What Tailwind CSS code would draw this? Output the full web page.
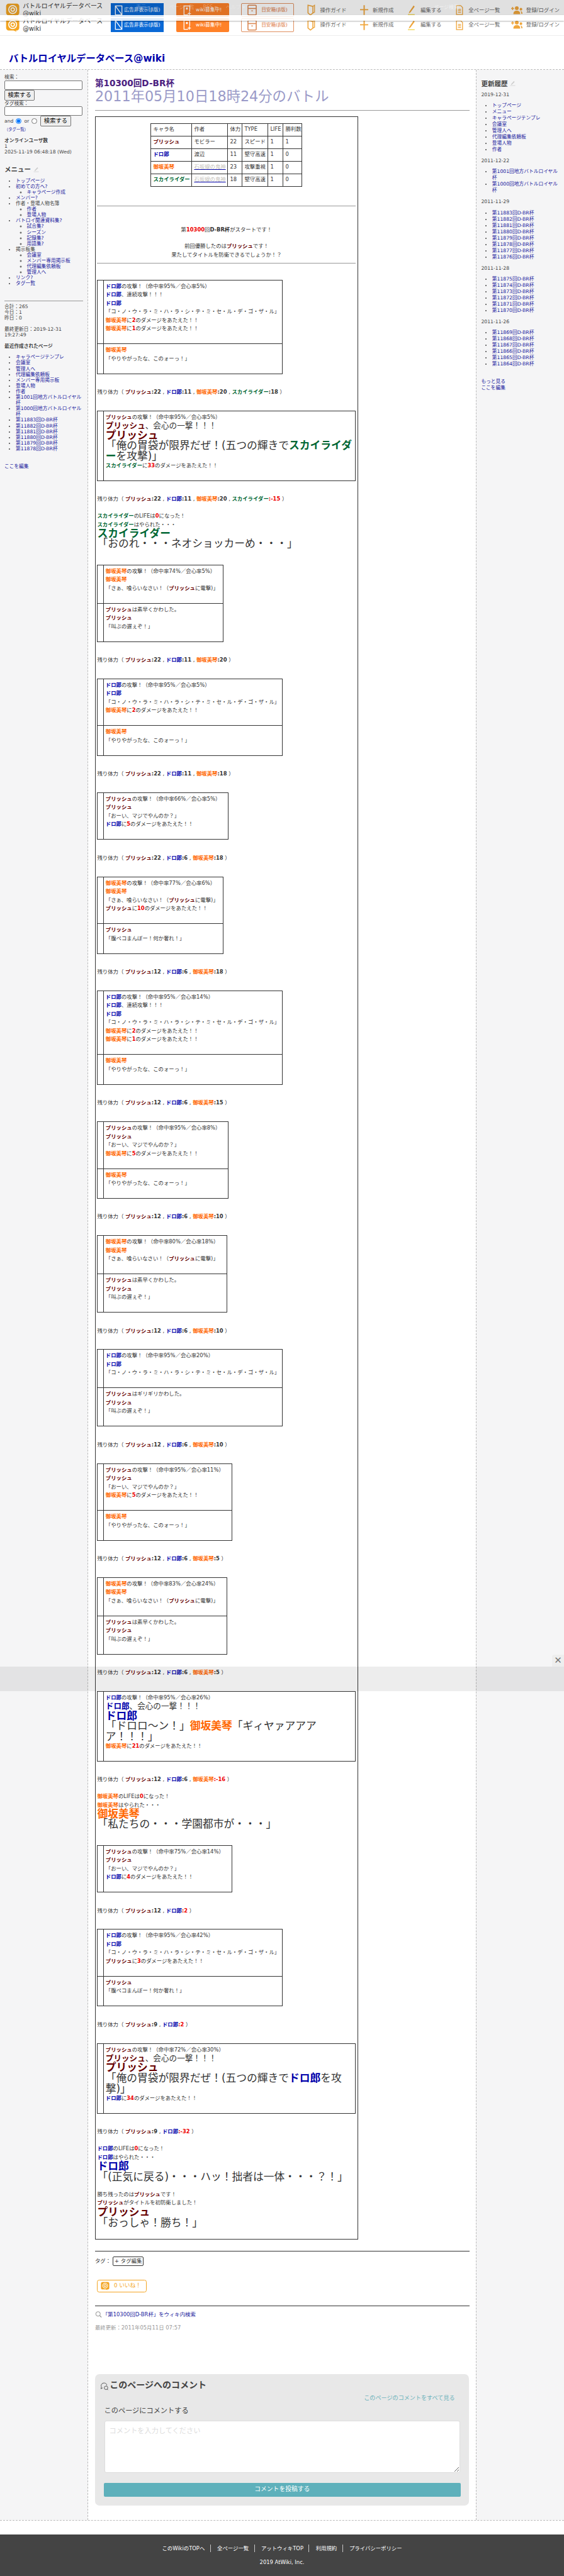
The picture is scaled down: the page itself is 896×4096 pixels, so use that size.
<!DOCTYPE html>
<html lang="ja">
<head>
<meta charset="UTF-8">
<title>第10300回D-BR杯 - バトルロイヤルデータベース@wiki</title>
<script src="https://cdn.jsdelivr.net/npm/@tailwindcss/browser@4"></script>
</head>
<body class="bg-white font-['DejaVu_Sans','Noto_Sans_CJK_JP',sans-serif] text-[#333]">

<!-- icons used more than once -->
<svg class="hidden">
  <symbol id="logo" viewBox="0 0 32 32"><path d="M7 1h18a6 6 0 0 1 6 6v15a6 6 0 0 1-6 6h-2l2 3-7-3H7a6 6 0 0 1-6-6V7a6 6 0 0 1 6-6z" fill="#f4a521"/><circle cx="16" cy="14.500" r="9" fill="none" stroke="#fff" stroke-width="2.400"/><circle cx="16" cy="14.500" r="4" fill="none" stroke="#fff" stroke-width="2.400"/></symbol>
  <symbol id="no-ad" viewBox="0 0 20 26"><path d="M2 2h16v22H2z" fill="none" stroke="#fff" stroke-width="2"/><path d="M2 2l16 22" stroke="#fff" stroke-width="2"/></symbol>
  <symbol id="wiki-new" viewBox="0 0 20 26"><path d="M12 24H2V2h14v14" fill="none" stroke="#fff" stroke-width="2"/><path d="M15 17v8M11 21h8" stroke="#fff" stroke-width="2"/><path d="M7 6h4v5H7z" fill="#fff"/></symbol>
  <symbol id="suggest" viewBox="0 0 24 28"><rect x="1.500" y="1.500" width="21" height="25" rx="2" fill="none" stroke="#d9824a" stroke-width="2.400"/><path d="M2 10h20" stroke="#d9824a" stroke-width="2.400"/><path d="M10 15h4v2h-4z" fill="#d9824a"/></symbol>
  <symbol id="guide" viewBox="0 0 20 28"><path d="M2 2l12 3v16l-6 5-6-5z" fill="none" stroke="#f0a63c" stroke-width="2.400"/><path d="M14 5l4-3v17l-4 2" fill="none" stroke="#f0a63c" stroke-width="2"/></symbol>
  <symbol id="plus" viewBox="0 0 20 28"><path d="M10 2v24M0 13h20" stroke="#f0a63c" stroke-width="3"/></symbol>
  <symbol id="edit" viewBox="0 0 20 28"><path d="M15 2L4 18l-2 5 5-3L18 5z" fill="#f0a63c"/><path d="M0 26h18" stroke="#f0d23c" stroke-width="2"/></symbol>
  <symbol id="doc" viewBox="0 0 20 28"><path d="M2 2h11l5 5v19H2z" fill="none" stroke="#f0a63c" stroke-width="2.200"/><path d="M6 12h8M6 16h8M6 20h8" stroke="#f0a63c" stroke-width="2"/></symbol>
  <symbol id="users" viewBox="0 0 30 24"><circle cx="15" cy="6" r="5" fill="#f0a63c"/><path d="M6 22c0-7 4-9 9-9s9 2 9 9z" fill="#f0a63c"/><circle cx="26" cy="9" r="3.500" fill="#f0a63c"/><path d="M25 14c3 0 5 2 5 7h-3c0-3-1-5-2-7z" fill="#f0a63c"/><path d="M4 3v8M0 7h8" stroke="#f0a63c" stroke-width="2.400"/></symbol>
  <symbol id="pencil" viewBox="0 0 20 20"><path d="M14 2L5 12l-1 4 4-2 9-9z" fill="#ccc"/><path d="M1 18h18" stroke="#ccc" stroke-width="1.500"/></symbol>
</svg>

<div class="relative w-[896px] overflow-hidden">

  <!-- header: second copy of the bar sits in flow, the first one lies over it -->
  <header class="relative h-[57.2px] border-b border-[#eee] pt-[28.6px]">
    <div class="flex h-[22.3px] items-center pl-[9px]">
      <svg class="h-[22.3px] w-[22.3px] shrink-0"><use href="#logo"/></svg>
      <div class="ml-[4.9px] w-[140.3px] shrink-0 text-[9.8px] leading-[11.9px]">バトルロイヤルデータベース<br>@wiki</div>
      <a class="flex h-full w-[83.8px] shrink-0 items-center justify-center gap-[2px] bg-[#0a69d6] text-[7.7px] text-white"><svg class="h-[17px] w-[13px]"><use href="#no-ad"/></svg>広告非表示(β版)</a>
      <a class="ml-[19.5px] flex h-full w-[83.8px] shrink-0 items-center justify-center gap-[7px] rounded-[2px] bg-[#ff8128] text-[7.7px] text-white"><svg class="h-[17px] w-[13px]"><use href="#wiki-new"/></svg>wiki募集中!</a>
      <a class="ml-[19.5px] flex h-full w-[83.8px] shrink-0 items-center justify-center gap-[7px] rounded-[2px] border border-[#e09060] text-[7.7px] text-[#dd7a45]"><svg class="h-[18px] w-[15px]"><use href="#suggest"/></svg>目安箱(β版)</a>
      <div class="ml-[21.6px] flex items-center text-[8.4px] text-[#666]">
        <svg class="h-[20px] w-[13px]"><use href="#guide"/></svg><span class="ml-[7px]">操作ガイド</span>
        <svg class="ml-[21.6px] h-[20px] w-[13px]"><use href="#plus"/></svg><span class="ml-[7px]">新規作成</span>
        <svg class="ml-[23px] h-[20px] w-[12px]"><use href="#edit"/></svg><span class="ml-[7.500px]">編集する</span>
        <svg class="ml-[22.3px] h-[20px] w-[12px]"><use href="#doc"/></svg><span class="ml-[8.500px]">全ページ一覧</span>
        <svg class="ml-[18px] h-[15px] w-[18px]"><use href="#users"/></svg><span class="ml-[5.500px]">登録/ログイン</span>
      </div>
    </div>

    <div class="absolute inset-x-0 top-[4.9px] flex h-[22.3px] items-center pl-[9px]">
      <svg class="h-[22.3px] w-[22.3px] shrink-0"><use href="#logo"/></svg>
      <div class="ml-[4.9px] w-[140.3px] shrink-0 text-[9.8px] leading-[11.9px]">バトルロイヤルデータベース<br>@wiki</div>
      <a class="flex h-full w-[83.8px] shrink-0 items-center justify-center gap-[2px] bg-[#0a69d6] text-[7.7px] text-white"><svg class="h-[17px] w-[13px]"><use href="#no-ad"/></svg>広告非表示(β版)</a>
      <a class="ml-[19.5px] flex h-full w-[83.8px] shrink-0 items-center justify-center gap-[7px] rounded-[2px] bg-[#ff8128] text-[7.7px] text-white"><svg class="h-[17px] w-[13px]"><use href="#wiki-new"/></svg>wiki募集中!</a>
      <a class="ml-[19.5px] flex h-full w-[83.8px] shrink-0 items-center justify-center gap-[7px] rounded-[2px] border border-[#e09060] text-[7.7px] text-[#dd7a45]"><svg class="h-[18px] w-[15px]"><use href="#suggest"/></svg>目安箱(β版)</a>
      <div class="ml-[21.6px] flex items-center text-[8.4px] text-[#666]">
        <svg class="h-[20px] w-[13px]"><use href="#guide"/></svg><span class="ml-[7px]">操作ガイド</span>
        <svg class="ml-[21.6px] h-[20px] w-[13px]"><use href="#plus"/></svg><span class="ml-[7px]">新規作成</span>
        <svg class="ml-[23px] h-[20px] w-[12px]"><use href="#edit"/></svg><span class="ml-[7.500px]">編集する</span>
        <svg class="ml-[22.3px] h-[20px] w-[12px]"><use href="#doc"/></svg><span class="ml-[8.500px]">全ページ一覧</span>
        <svg class="ml-[18px] h-[15px] w-[18px]"><use href="#users"/></svg><span class="ml-[5.500px]">登録/ログイン</span>
      </div>
    </div>

    <!-- dim strip with its faint menu, then the pale band and its shadow -->
    <div class="absolute inset-x-0 top-0 flex h-[23.7px] items-center bg-black/12 pl-[130px] text-[8px] text-white/30">
      <span>編集</span><span class="ml-[70px]">表示 ▾</span><span class="ml-[30px]">ページ一覧</span><span class="ml-[14px]">RSS ▾</span><span class="ml-[14px]">ヘルプ ▾</span>
      <span class="ml-[300px] text-white/60">ページ検索</span>
    </div>
    <div class="absolute inset-x-0 top-[23.7px] h-[9.800px] bg-white/85 shadow-[0_1px_2px_rgba(0,0,0,0.3)]"></div>
  </header>

  <!-- site title -->
  <div class="h-[53px] pl-[14px] pt-[26px] text-[15.3px] leading-[20px] font-bold text-[#0000aa]">バトルロイヤルデータベース@wiki</div>

  <div class="flex h-[3897.8px] border-y border-dashed border-[#bbb]">

    <!-- left column -->
    <aside class="w-[140.3px] shrink-0 border-r border-dashed border-[#bbb] bg-[#f5f5f6] px-[7px] pt-[7.3px] text-[7.7px] leading-[9.1px] text-[#444]">
      <div>検索：</div>
      <input type="text" class="mt-[0.7px] block h-[14.3px] w-[124.2px] rounded-[2px] border border-[#767676] bg-white">
      <button class="block h-[17px] w-[48.2px] rounded-[2px] border border-[#767676] bg-[#efefef] text-[9.3px] leading-none text-black">検索する</button>
      <div>タグ検索：</div>
      <input type="text" class="mt-[0.7px] block h-[14.3px] w-[124.2px] rounded-[2px] border border-[#767676] bg-white">
      <div class="flex h-[17px] items-center">
        <span>and</span>
        <input type="radio" name="tagop" checked class="ml-[4px] h-[9px] w-[9px]">
        <span class="ml-[4px]">or</span>
        <input type="radio" name="tagop" class="ml-[4px] h-[9px] w-[9px]">
        <button class="ml-[5px] h-[17px] w-[48.2px] rounded-[2px] border border-[#767676] bg-[#efefef] text-[9.3px] leading-none text-black">検索する</button>
      </div>
      <a class="block text-[6.3px] text-[#1a1a9e]">（タグ一覧）</a>
      <div class="mt-[9.4px] font-bold">オンラインユーザ数</div>
      <div>1</div>
      <div>2025-11-19 06:48:18 (Wed)</div>
      <h3 class="mt-[15.7px] flex items-center text-[10.5px] leading-[14px] font-bold">メニュー<svg class="ml-[4px] h-[9px] w-[9px]"><use href="#pencil"/></svg></h3>
      <ul class="mt-[6.6px] list-disc pl-[18.1px] text-[#1a1a9e] marker:text-[#444] [&_ul]:list-[circle] [&_ul]:pl-[17.45px]">
        <li><a>トップページ</a></li>
        <li><a>初めての方へ?</a>
          <ul><li><a>キャラページ作成</a></li></ul></li>
        <li><a>メンバー?</a></li>
        <li class="text-[#444]">作者・登場人物名簿
          <ul class="text-[#1a1a9e]"><li><a>作者</a></li><li><a>登場人物</a></li></ul></li>
        <li><a>バトロイ関連資料集?</a>
          <ul><li><a>試合集?</a></li><li><a>シーズン</a></li><li><a>記録集?</a></li><li><a>用語集?</a></li></ul></li>
        <li class="text-[#444]">掲示板集
          <ul class="text-[#1a1a9e]"><li><a>会議室</a></li><li><a>メンバー専用掲示板</a></li><li><a>代理編集依頼板</a></li><li><a>管理人へ</a></li></ul></li>
        <li><a>リンク?</a></li>
        <li><a>タグ一覧</a></li>
      </ul>
      <hr class="mt-[22.3px] w-[125px] border-[#999]">
      <div class="mt-[4.2px]">合計：265<br>今日：1<br>昨日：0</div>
      <div class="mt-[9.1px]">最終更新日：2019-12-31<br>19:27:49</div>
      <div class="mt-[8.4px] font-bold">最近作成されたページ</div>
      <ul class="mt-[8.4px] list-disc pl-[18.1px] text-[#1a1a9e] marker:text-[#444]">
        <li>キャラページテンプレ</li><li>会議室</li><li>管理人へ</li><li>代理編集依頼板</li><li>メンバー専用掲示板</li><li>登場人物</li><li>作者</li>
        <li>第1001回地方バトルロイヤル杯</li><li>第1000回地方バトルロイヤル杯</li>
        <li>第11883回D-BR杯</li><li>第11882回D-BR杯</li><li>第11881回D-BR杯</li><li>第11880回D-BR杯</li><li>第11879回D-BR杯</li><li>第11878回D-BR杯</li>
      </ul>
      <a class="mt-[18.8px] block text-[#1a1a9e]">ここを編集</a>
    </aside>

    <!-- main column -->
    <main class="min-w-0 flex-1 px-[10.6px] pt-[13.3px]">
      <h2 class="text-[13.6px] leading-[16.8px] font-bold text-[#4b2080]">第10300回D-BR杯</h2>
      <h1 class="text-[22.3px] leading-[25.1px] text-[#9a9ac8]">2011年05月10日18時24分のバトル</h1>
      <hr class="mt-[9px] border-[#999]">

      <!-- battle log -->
      <div class="mt-[8.4px] w-[418px] border border-[#333] px-[2.5px] pb-[18.1px] pt-[9.8px] text-[8.4px] leading-[13.5px]">

        <table class="mx-auto w-[241px] table-fixed border-collapse [&_td]:h-[20px] [&_td]:border [&_td]:border-[#333] [&_td]:pl-[3px]">
          <tr><td class="w-[65px]">キャラ名</td><td class="w-[57px]">作者</td><td class="w-[23px]">体力</td><td class="w-[41px]">TYPE</td><td class="w-[24px]">LIFE</td><td>勝利数</td></tr>
          <tr><td><b class="text-[#600]">プリッシュ</b></td><td>モビラー</td><td>22</td><td>スピード</td><td>1</td><td>1</td></tr>
          <tr><td><b class="text-[#00a]">ドロ郎</b></td><td>渡辺</td><td>11</td><td>堅守高速</td><td>1</td><td>0</td></tr>
          <tr><td><b class="text-[#f60]">御坂美琴</b></td><td><a class="text-[#c4bfba] underline decoration-[#00a]">石坂線の鬼神</a></td><td>23</td><td>攻撃重視</td><td>1</td><td>0</td></tr>
          <tr><td><b class="text-[#063]">スカイライダー</b></td><td><a class="text-[#c4bfba] underline decoration-[#00a]">石坂線の鬼神</a></td><td>18</td><td>堅守高速</td><td>1</td><td>0</td></tr>
        </table>

        <hr class="mt-[30px] border-[#999]">
        <div class="mt-[30px] text-center leading-[14px]">第<b class="text-[#e00]">10300</b>回<b>D-BR杯</b>がスタートです！</div>
        <div class="mt-[12.6px] text-center leading-[14px]">前回優勝したのは<b class="text-[#600]">プリッシュ</b>です！<br>果たしてタイトルを防衛できるでしょうか！？</div>
        <hr class="mt-[5.6px] border-[#999]">

        <div class="pt-[25.8px] [&_table]:border-collapse [&_td]:border [&_td]:border-[#333] [&_td:first-child]:w-[9.4px] [&_td:last-child]:pb-[3px] [&_td:last-child]:pl-[3px] [&_td:last-child]:pt-[3px] [&_td:last-child]:align-top">

          <table class="w-[295px]">
            <tr><td></td><td><b class="text-[#00a]">ドロ郎</b>の攻撃！（命中率95%／会心率5%）<br><b class="text-[#00a]">ドロ郎</b>、連続攻撃！！！<br><b class="text-[#00a]">ドロ郎</b><br>「コ・ノ・ウ・ラ・ミ・ハ・ラ・シ・テ・ミ・セ・ル・デ・ゴ・ザ・ル」<br><b class="text-[#f60]">御坂美琴</b>に<b class="text-[#e00]">2</b>のダメージをあたえた！！<br><b class="text-[#f60]">御坂美琴</b>に<b class="text-[#e00]">1</b>のダメージをあたえた！！<br><br></td></tr>
            <tr><td></td><td><b class="text-[#f60]">御坂美琴</b><br>「やりやがったな、このォーっ！」<br><br></td></tr>
          </table>
          <p class="my-[22.35px]">残り体力（ <b class="text-[#600]">プリッシュ</b><b>:22</b> , <b class="text-[#00a]">ドロ郎</b><b>:11</b> , <b class="text-[#f60]">御坂美琴</b><b>:20</b> , <b class="text-[#063]">スカイライダー</b><b>:18</b> ）</p>

          <table class="w-[411px]">
            <tr><td></td><td>
              <div><b class="text-[#600]">プリッシュ</b>の攻撃！（命中率95%／会心率5%）</div>
              <div class="text-[12.6px] leading-[14.3px]"><b class="text-[#600]">プリッシュ</b>、会心の一撃！！！</div>
              <div class="text-[16.75px] leading-[15.7px]"><b class="text-[#600]">プリッシュ</b></div>
              <div class="text-[16.75px] leading-[16.75px]">「俺の胃袋が限界だぜ！(五つの輝きで<b class="text-[#063]">スカイライダ<br>ー</b>を攻撃)」</div>
              <div><b class="text-[#063]">スカイライダー</b>に<b class="text-[#e00]">33</b>のダメージをあたえた！！</div><br>
            </td></tr>
          </table>
          <p class="mb-[13.7px] mt-[22.35px]">残り体力（ <b class="text-[#600]">プリッシュ</b><b>:22</b> , <b class="text-[#00a]">ドロ郎</b><b>:11</b> , <b class="text-[#f60]">御坂美琴</b><b>:20</b> , <b class="text-[#063]">スカイライダー</b><b class="text-[#e00]">:-15</b> ）</p>
          <div><b class="text-[#063]">スカイライダー</b>のLIFEは<b class="text-[#e00]">0</b>になった！<br><b class="text-[#063]">スカイライダー</b>はやられた・・・</div>
          <div class="text-[16.75px] leading-[15.7px]"><b class="text-[#063]">スカイライダー</b></div>
          <div class="mb-[25.2px] text-[16.75px] leading-[15.4px]">「おのれ・・・ネオショッカーめ・・・」</div>

          <table class="w-[200.3px]">
            <tr><td></td><td><b class="text-[#f60]">御坂美琴</b>の攻撃！（命中率74%／会心率5%）<br><b class="text-[#f60]">御坂美琴</b><br>「さぁ、喰らいなさい！（<b class="text-[#600]">プリッシュ</b>に電撃)」<br><br></td></tr>
            <tr><td></td><td><b class="text-[#600]">プリッシュ</b>は素早くかわした。<br><b class="text-[#600]">プリッシュ</b><br>「叫ぶの遅ぇぞ！」<br><br></td></tr>
          </table>
          <p class="my-[22.35px]">残り体力（ <b class="text-[#600]">プリッシュ</b><b>:22</b> , <b class="text-[#00a]">ドロ郎</b><b>:11</b> , <b class="text-[#f60]">御坂美琴</b><b>:20</b> ）</p>

          <table class="w-[295px]">
            <tr><td></td><td><b class="text-[#00a]">ドロ郎</b>の攻撃！（命中率95%／会心率5%）<br><b class="text-[#00a]">ドロ郎</b><br>「コ・ノ・ウ・ラ・ミ・ハ・ラ・シ・テ・ミ・セ・ル・デ・ゴ・ザ・ル」<br><b class="text-[#f60]">御坂美琴</b>に<b class="text-[#e00]">2</b>のダメージをあたえた！！<br><br></td></tr>
            <tr><td></td><td><b class="text-[#f60]">御坂美琴</b><br>「やりやがったな、このォーっ！」<br><br></td></tr>
          </table>
          <p class="my-[22.35px]">残り体力（ <b class="text-[#600]">プリッシュ</b><b>:22</b> , <b class="text-[#00a]">ドロ郎</b><b>:11</b> , <b class="text-[#f60]">御坂美琴</b><b>:18</b> ）</p>

          <table class="w-[208.7px]">
            <tr><td></td><td><b class="text-[#600]">プリッシュ</b>の攻撃！（命中率66%／会心率5%）<br><b class="text-[#600]">プリッシュ</b><br>「おーい、マジでやんのか？」<br><b class="text-[#00a]">ドロ郎</b>に<b class="text-[#e00]">5</b>のダメージをあたえた！！<br><br></td></tr>
          </table>
          <p class="my-[22.35px]">残り体力（ <b class="text-[#600]">プリッシュ</b><b>:22</b> , <b class="text-[#00a]">ドロ郎</b><b>:6</b> , <b class="text-[#f60]">御坂美琴</b><b>:18</b> ）</p>

          <table class="w-[200.3px]">
            <tr><td></td><td><b class="text-[#f60]">御坂美琴</b>の攻撃！（命中率77%／会心率6%）<br><b class="text-[#f60]">御坂美琴</b><br>「さぁ、喰らいなさい！（<b class="text-[#600]">プリッシュ</b>に電撃)」<br><b class="text-[#600]">プリッシュ</b>に<b class="text-[#e00]">10</b>のダメージをあたえた！！<br><br></td></tr>
            <tr><td></td><td><b class="text-[#600]">プリッシュ</b><br>「腹ペコまんぼー！何か奢れ！」<br><br></td></tr>
          </table>
          <p class="my-[22.35px]">残り体力（ <b class="text-[#600]">プリッシュ</b><b>:12</b> , <b class="text-[#00a]">ドロ郎</b><b>:6</b> , <b class="text-[#f60]">御坂美琴</b><b>:18</b> ）</p>

          <table class="w-[295px]">
            <tr><td></td><td><b class="text-[#00a]">ドロ郎</b>の攻撃！（命中率95%／会心率14%）<br><b class="text-[#00a]">ドロ郎</b>、連続攻撃！！！<br><b class="text-[#00a]">ドロ郎</b><br>「コ・ノ・ウ・ラ・ミ・ハ・ラ・シ・テ・ミ・セ・ル・デ・ゴ・ザ・ル」<br><b class="text-[#f60]">御坂美琴</b>に<b class="text-[#e00]">2</b>のダメージをあたえた！！<br><b class="text-[#f60]">御坂美琴</b>に<b class="text-[#e00]">1</b>のダメージをあたえた！！<br><br></td></tr>
            <tr><td></td><td><b class="text-[#f60]">御坂美琴</b><br>「やりやがったな、このォーっ！」<br><br></td></tr>
          </table>
          <p class="my-[22.35px]">残り体力（ <b class="text-[#600]">プリッシュ</b><b>:12</b> , <b class="text-[#00a]">ドロ郎</b><b>:6</b> , <b class="text-[#f60]">御坂美琴</b><b>:15</b> ）</p>

          <table class="w-[208.7px]">
            <tr><td></td><td><b class="text-[#600]">プリッシュ</b>の攻撃！（命中率95%／会心率8%）<br><b class="text-[#600]">プリッシュ</b><br>「おーい、マジでやんのか？」<br><b class="text-[#f60]">御坂美琴</b>に<b class="text-[#e00]">5</b>のダメージをあたえた！！<br><br></td></tr>
            <tr><td></td><td><b class="text-[#f60]">御坂美琴</b><br>「やりやがったな、このォーっ！」<br><br></td></tr>
          </table>
          <p class="my-[22.35px]">残り体力（ <b class="text-[#600]">プリッシュ</b><b>:12</b> , <b class="text-[#00a]">ドロ郎</b><b>:6</b> , <b class="text-[#f60]">御坂美琴</b><b>:10</b> ）</p>

          <table class="w-[206.6px]">
            <tr><td></td><td><b class="text-[#f60]">御坂美琴</b>の攻撃！（命中率80%／会心率18%）<br><b class="text-[#f60]">御坂美琴</b><br>「さぁ、喰らいなさい！（<b class="text-[#600]">プリッシュ</b>に電撃)」<br><br></td></tr>
            <tr><td></td><td><b class="text-[#600]">プリッシュ</b>は素早くかわした。<br><b class="text-[#600]">プリッシュ</b><br>「叫ぶの遅ぇぞ！」<br><br></td></tr>
          </table>
          <p class="my-[22.35px]">残り体力（ <b class="text-[#600]">プリッシュ</b><b>:12</b> , <b class="text-[#00a]">ドロ郎</b><b>:6</b> , <b class="text-[#f60]">御坂美琴</b><b>:10</b> ）</p>

          <table class="w-[295px]">
            <tr><td></td><td><b class="text-[#00a]">ドロ郎</b>の攻撃！（命中率95%／会心率20%）<br><b class="text-[#00a]">ドロ郎</b><br>「コ・ノ・ウ・ラ・ミ・ハ・ラ・シ・テ・ミ・セ・ル・デ・ゴ・ザ・ル」<br><br></td></tr>
            <tr><td></td><td><b class="text-[#600]">プリッシュ</b>はギリギリかわした。<br><b class="text-[#600]">プリッシュ</b><br>「叫ぶの遅ぇぞ！」<br><br></td></tr>
          </table>
          <p class="my-[22.35px]">残り体力（ <b class="text-[#600]">プリッシュ</b><b>:12</b> , <b class="text-[#00a]">ドロ郎</b><b>:6</b> , <b class="text-[#f60]">御坂美琴</b><b>:10</b> ）</p>

          <table class="w-[214.3px]">
            <tr><td></td><td><b class="text-[#600]">プリッシュ</b>の攻撃！（命中率95%／会心率11%）<br><b class="text-[#600]">プリッシュ</b><br>「おーい、マジでやんのか？」<br><b class="text-[#f60]">御坂美琴</b>に<b class="text-[#e00]">5</b>のダメージをあたえた！！<br><br></td></tr>
            <tr><td></td><td><b class="text-[#f60]">御坂美琴</b><br>「やりやがったな、このォーっ！」<br><br></td></tr>
          </table>
          <p class="my-[22.35px]">残り体力（ <b class="text-[#600]">プリッシュ</b><b>:12</b> , <b class="text-[#00a]">ドロ郎</b><b>:6</b> , <b class="text-[#f60]">御坂美琴</b><b>:5</b> ）</p>

          <table class="w-[206.6px]">
            <tr><td></td><td><b class="text-[#f60]">御坂美琴</b>の攻撃！（命中率83%／会心率24%）<br><b class="text-[#f60]">御坂美琴</b><br>「さぁ、喰らいなさい！（<b class="text-[#600]">プリッシュ</b>に電撃)」<br><br></td></tr>
            <tr><td></td><td><b class="text-[#600]">プリッシュ</b>は素早くかわした。<br><b class="text-[#600]">プリッシュ</b><br>「叫ぶの遅ぇぞ！」<br><br></td></tr>
          </table>
          <p class="my-[22.35px]">残り体力（ <b class="text-[#600]">プリッシュ</b><b>:12</b> , <b class="text-[#00a]">ドロ郎</b><b>:6</b> , <b class="text-[#f60]">御坂美琴</b><b>:5</b> ）</p>

          <table class="w-[411px]">
            <tr><td></td><td>
              <div><b class="text-[#00a]">ドロ郎</b>の攻撃！（命中率95%／会心率26%）</div>
              <div class="text-[12.6px] leading-[14.3px]"><b class="text-[#00a]">ドロ郎</b>、会心の一撃！！！</div>
              <div class="text-[16.75px] leading-[15.7px]"><b class="text-[#00a]">ドロ郎</b></div>
              <div class="text-[16.75px] leading-[16.75px]">「ドロロ〜ン！」<b class="text-[#f60]">御坂美琴</b>「ギィヤァアアア<br>ア！！！」</div>
              <div><b class="text-[#f60]">御坂美琴</b>に<b class="text-[#e00]">21</b>のダメージをあたえた！！</div><br>
            </td></tr>
          </table>
          <p class="mb-[13.7px] mt-[22.35px]">残り体力（ <b class="text-[#600]">プリッシュ</b><b>:12</b> , <b class="text-[#00a]">ドロ郎</b><b>:6</b> , <b class="text-[#f60]">御坂美琴</b><b class="text-[#e00]">:-16</b> ）</p>
          <div><b class="text-[#f60]">御坂美琴</b>のLIFEは<b class="text-[#e00]">0</b>になった！<br><b class="text-[#f60]">御坂美琴</b>はやられた・・・</div>
          <div class="text-[16.75px] leading-[15.7px]"><b class="text-[#f60]">御坂美琴</b></div>
          <div class="mb-[25.2px] text-[16.75px] leading-[15.4px]">「私たちの・・・学園都市が・・・」</div>

          <table class="w-[214.3px]">
            <tr><td></td><td><b class="text-[#600]">プリッシュ</b>の攻撃！（命中率75%／会心率14%）<br><b class="text-[#600]">プリッシュ</b><br>「おーい、マジでやんのか？」<br><b class="text-[#00a]">ドロ郎</b>に<b class="text-[#e00]">4</b>のダメージをあたえた！！<br><br></td></tr>
          </table>
          <p class="my-[22.35px]">残り体力（ <b class="text-[#600]">プリッシュ</b><b>:12</b> , <b class="text-[#00a]">ドロ郎</b><b class="text-[#e00]">:2</b> ）</p>

          <table class="w-[295px]">
            <tr><td></td><td><b class="text-[#00a]">ドロ郎</b>の攻撃！（命中率95%／会心率42%）<br><b class="text-[#00a]">ドロ郎</b><br>「コ・ノ・ウ・ラ・ミ・ハ・ラ・シ・テ・ミ・セ・ル・デ・ゴ・ザ・ル」<br><b class="text-[#600]">プリッシュ</b>に<b class="text-[#e00]">3</b>のダメージをあたえた！！<br><br></td></tr>
            <tr><td></td><td><b class="text-[#600]">プリッシュ</b><br>「腹ペコまんぼー！何か奢れ！」<br><br></td></tr>
          </table>
          <p class="my-[22.35px]">残り体力（ <b class="text-[#600]">プリッシュ</b><b>:9</b> , <b class="text-[#00a]">ドロ郎</b><b class="text-[#e00]">:2</b> ）</p>

          <table class="w-[411px]">
            <tr><td></td><td>
              <div><b class="text-[#600]">プリッシュ</b>の攻撃！（命中率72%／会心率30%）</div>
              <div class="text-[12.6px] leading-[14.3px]"><b class="text-[#600]">プリッシュ</b>、会心の一撃！！！</div>
              <div class="text-[16.75px] leading-[15.7px]"><b class="text-[#600]">プリッシュ</b></div>
              <div class="text-[16.75px] leading-[16.75px]">「俺の胃袋が限界だぜ！(五つの輝きで<b class="text-[#00a]">ドロ郎</b>を攻<br>撃)」</div>
              <div><b class="text-[#00a]">ドロ郎</b>に<b class="text-[#e00]">34</b>のダメージをあたえた！！</div><br>
            </td></tr>
          </table>
          <p class="mb-[13.7px] mt-[22.35px]">残り体力（ <b class="text-[#600]">プリッシュ</b><b>:9</b> , <b class="text-[#00a]">ドロ郎</b><b class="text-[#e00]">:-32</b> ）</p>
          <div><b class="text-[#00a]">ドロ郎</b>のLIFEは<b class="text-[#e00]">0</b>になった！<br><b class="text-[#00a]">ドロ郎</b>はやられた・・・</div>
          <div class="text-[16.75px] leading-[15.7px]"><b class="text-[#00a]">ドロ郎</b></div>
          <div class="text-[16.75px] leading-[16px]">「(正気に戻る)・・・ハッ！拙者は一体・・・？！」</div>

          <div class="mt-[14px]">勝ち残ったのは<b class="text-[#600]">プリッシュ</b>です！<br><b class="text-[#600]">プリッシュ</b>がタイトルを初防衛しました！</div>
          <div class="text-[16.75px] leading-[15.7px]"><b class="text-[#600]">プリッシュ</b></div>
          <div class="text-[16.75px] leading-[16px]">「おっしゃ！勝ち！」</div>
        </div>
      </div>

      <hr class="mt-[18.1px] border-[#333]">
      <div class="mt-[8.4px] flex items-center text-[8.4px]">
        <span class="w-[28px]">タグ：</span>
        <a class="flex h-[14.7px] w-[49.6px] items-center justify-center rounded-[2px] border border-[#333]">+ タグ編集</a>
      </div>
      <a class="ml-[3.5px] mt-[22.3px] flex h-[19.5px] w-[78.2px] items-center rounded-[3.5px] border border-[#f4a521] pl-[4.5px] text-[8.7px] text-[#f4a521]"><svg class="h-[14px] w-[14px]"><use href="#logo"/></svg><span class="ml-[7px]">0 いいね！</span></a>
      <hr class="mt-[21px] border-[#333]">
      <div class="mt-[7px] flex items-center text-[8.4px] leading-[13.5px] text-[#1a1a9e]">
        <svg class="h-[10px] w-[11px]" viewBox="0 0 14 14"><circle cx="6" cy="6" r="5" fill="none" stroke="#888" stroke-width="1.300"/><path d="M10 10l3.500 3.500" stroke="#888" stroke-width="1.600"/></svg>
        <a class="ml-[1px]">「第10300回D-BR杯」をウィキ内検索</a>
      </div>
      <p class="mt-[8.1px] text-[8.4px] leading-[13.5px] text-[#999]">最終更新：2011年05月11日 07:57</p>

      <!-- comment form -->
      <section class="mt-[65.8px] h-[209.4px] w-[594px] rounded-[7px] bg-[#e8e8e8] pt-[8.4px]">
        <h3 class="flex h-[19.5px] items-center pl-[8.4px] text-[14px] font-bold text-[#444]">
          <svg class="mr-[1px] mt-[3px] h-[14px] w-[14px]" viewBox="0 0 20 20" fill="none" stroke="#555" stroke-width="1.400"><path d="M3 12c-2-4 1-9 6-9 4 0 7 3 6 6"/><path d="M3 12l-1 4 4-2"/><circle cx="13.500" cy="14" r="4"/><path d="M16 17l2 2"/></svg>このページへのコメント
        </h3>
        <div class="mt-[4.2px] pr-[22.3px] text-right text-[9.1px] leading-[12.6px] text-[#6db3bb]">このページのコメントをすべて見る</div>
        <div class="mt-[7px] pl-[14.7px] text-[11.2px] leading-[15.4px] text-[#444]">このページにコメントする</div>
        <textarea placeholder="コメントを入力してください" class="mx-[14.7px] mt-[7.7px] block h-[82.4px] w-[565.4px] rounded-[3px] border border-[#ddd] bg-white px-[7px] py-[8px] text-[11.2px] placeholder:text-[#ddd]"></textarea>
        <button class="mx-[14px] mt-[16px] block h-[22.3px] w-[566.8px] rounded-[2px] bg-[#5eb0bb] text-[9.8px] text-white">コメントを投稿する</button>
      </section>
    </main>

    <!-- right column -->
    <aside class="min-w-0 w-[139.6px] shrink-0 border-l border-dashed border-[#bbb] bg-[#f5f5f6] pl-[7px] pr-[10px] pt-[14.7px] text-[7.7px] leading-[10px] text-[#444] [&_ul]:list-disc [&_ul]:pl-[17.45px] [&_ul]:text-[#1a1a9e] [&_ul]:marker:text-[#444]">
      <h3 class="flex items-center text-[10.5px] leading-[14px] font-bold">更新履歴<svg class="ml-[4px] h-[9px] w-[9px]"><use href="#pencil"/></svg></h3>
      <div class="mb-[7.4px] mt-[5.8px]">2019-12-31</div>
      <ul><li>トップページ</li><li>メニュー</li><li>キャラページテンプレ</li><li>会議室</li><li>管理人へ</li><li>代理編集依頼板</li><li>登場人物</li><li>作者</li></ul>
      <div class="mb-[7.4px] mt-[7.9px]">2011-12-22</div>
      <ul><li>第1001回地方バトルロイヤル杯</li><li>第1000回地方バトルロイヤル杯</li></ul>
      <div class="mb-[7.4px] mt-[7.9px]">2011-11-29</div>
      <ul><li>第11883回D-BR杯</li><li>第11882回D-BR杯</li><li>第11881回D-BR杯</li><li>第11880回D-BR杯</li><li>第11879回D-BR杯</li><li>第11878回D-BR杯</li><li>第11877回D-BR杯</li><li>第11876回D-BR杯</li></ul>
      <div class="mb-[7.4px] mt-[7.9px]">2011-11-28</div>
      <ul><li>第11875回D-BR杯</li><li>第11874回D-BR杯</li><li>第11873回D-BR杯</li><li>第11872回D-BR杯</li><li>第11871回D-BR杯</li><li>第11870回D-BR杯</li></ul>
      <div class="mb-[7.4px] mt-[7.9px]">2011-11-26</div>
      <ul><li>第11869回D-BR杯</li><li>第11868回D-BR杯</li><li>第11867回D-BR杯</li><li>第11866回D-BR杯</li><li>第11865回D-BR杯</li><li>第11864回D-BR杯</li></ul>
      <div class="mt-[17.4px] text-[#1a1a9e]">もっと見る<br>ここを編集</div>
    </aside>
  </div>

  <!-- footer -->
  <footer class="mt-[21.6px] flex h-[66.6px] flex-col items-center bg-[#444] pt-[16.8px] text-[8.4px] leading-[12px] text-white">
    <div class="flex items-center">
      <a class="border-r border-white/70 pr-[8.4px]">このWikiのTOPへ</a>
      <a class="ml-[10.4px] border-r border-white/70 pr-[8.4px]">全ページ一覧</a>
      <a class="ml-[10.4px] border-r border-white/70 pr-[8.4px]">アットウィキTOP</a>
      <a class="ml-[10.4px] border-r border-white/70 pr-[8.4px]">利用規約</a>
      <a class="ml-[10.4px]">プライバシーポリシー</a>
    </div>
    <div class="mt-[10px]">2019 AtWiki, Inc.</div>
  </footer>

  <!-- ad strip left empty, lies over the page -->
  <div class="absolute inset-x-0 top-[2650.3px] h-[38.4px] bg-black/7"></div>
  <div class="absolute right-0 top-[2630.8px] flex h-[19.6px] w-[19px] items-center justify-center rounded-tl-[4px] bg-[#eee] text-[15px] text-[#777]">✕</div>
</div>
</body>
</html>
